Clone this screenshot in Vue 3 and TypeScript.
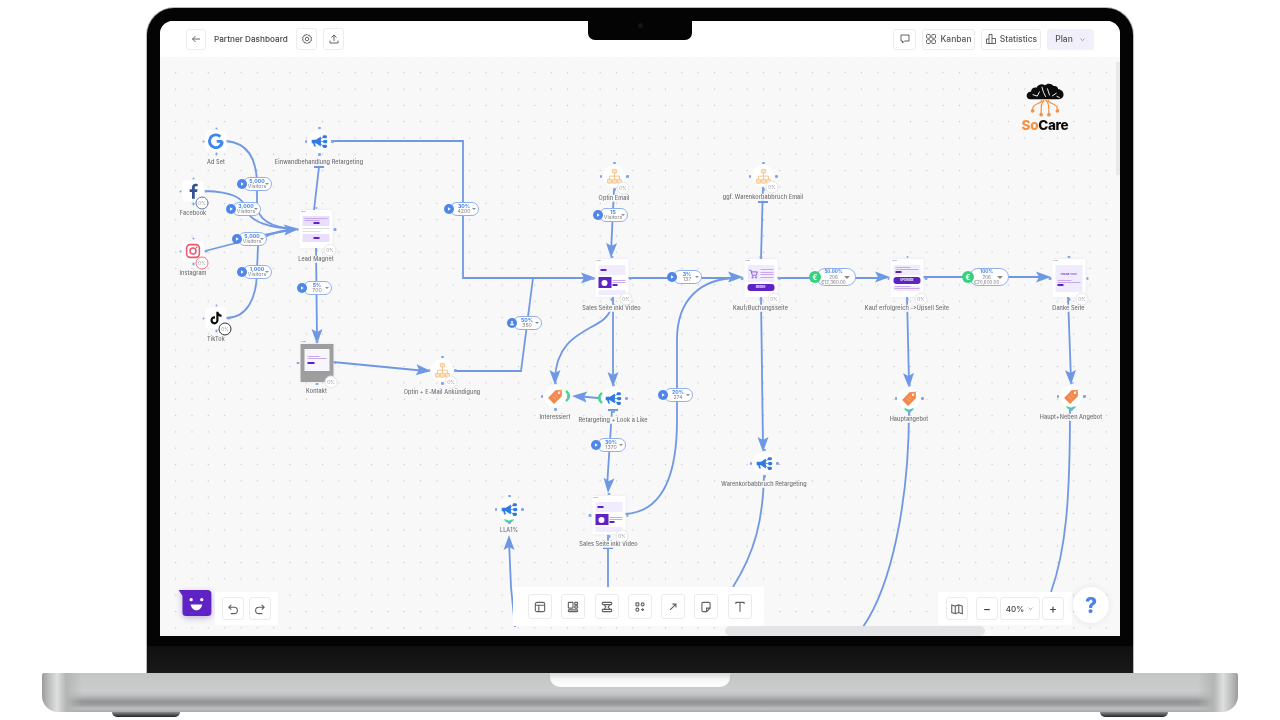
<script setup lang="ts">
interface FlowNode {
  kind: 'circle' | 'brand' | 'page'
  art: string
  x: number
  y: number
  label: string
  labelY: number
  badge?: { x: number; y: number; color?: string }
}

interface Stat {
  x: number
  y: number
  top: string
  bottom: string
  person?: boolean
}

// coordinates are screenshot pixels, the canvas starts at 160,57
const at = (x: number, y: number) => ({ left: `${x - 160}px`, top: `${y - 57}px` })

const nodes: FlowNode[] = [
  { kind: 'brand', art: 'google', x: 216, y: 141, label: 'Ad Set', labelY: 162 },
  { kind: 'brand', art: 'facebook', x: 193, y: 191, label: 'Facebook', labelY: 213, badge: { x: 202, y: 203, color: '#5f76a8' } },
  { kind: 'brand', art: 'instagram', x: 193, y: 251, label: 'Instagram', labelY: 273, badge: { x: 202, y: 263, color: '#f4707f' } },
  { kind: 'brand', art: 'tiktok', x: 216, y: 318, label: 'TikTok', labelY: 339, badge: { x: 225, y: 329, color: '#333333' } },
  { kind: 'circle', art: 'megaphone', x: 319, y: 141, label: 'Einwandbehandlung Retargeting', labelY: 162 },
  { kind: 'page', art: 'lead', x: 316, y: 229, label: 'Lead Magnet', labelY: 259, badge: { x: 330, y: 250 } },
  { kind: 'page', art: 'kontakt', x: 316.5, y: 362.5, label: 'Kontakt', labelY: 391, badge: { x: 331, y: 382 } },
  { kind: 'circle', art: 'funnel', x: 442, y: 370, label: 'Optin + E-Mail Ankündigung', labelY: 392, badge: { x: 451, y: 382 } },
  { kind: 'circle', art: 'funnel', x: 614, y: 176, label: 'Optin Email', labelY: 198, badge: { x: 623, y: 188 } },
  { kind: 'page', art: 'sales', x: 611.5, y: 278, label: 'Sales Seite inkl Video', labelY: 308, badge: { x: 626, y: 299 } },
  { kind: 'circle', art: 'funnel', x: 763, y: 176, label: 'ggf. Warenkorbabbruch Email', labelY: 197, badge: { x: 772, y: 187 } },
  { kind: 'page', art: 'cart', x: 760.5, y: 278, label: 'Kauf/Buchungsseite', labelY: 308, badge: { x: 774, y: 299 } },
  { kind: 'page', art: 'upsell', x: 907, y: 278, label: 'Kauf erfolgreich ->Upsell Seite', labelY: 308, badge: { x: 921, y: 299 } },
  { kind: 'page', art: 'thanks', x: 1068.5, y: 278, label: 'Danke Seite', labelY: 308, badge: { x: 1082, y: 299 } },
  { kind: 'circle', art: 'tag', x: 555, y: 396, label: 'Interessiert', labelY: 417 },
  { kind: 'circle', art: 'megaphone', x: 613, y: 398, label: 'Retargeting + Look a Like', labelY: 420 },
  { kind: 'circle', art: 'tag', x: 909, y: 398, label: 'Hauptangebot', labelY: 419 },
  { kind: 'circle', art: 'tag', x: 1071, y: 396, label: 'Haupt+Neben Angebot', labelY: 417 },
  { kind: 'circle', art: 'megaphone', x: 764, y: 463, label: 'Warenkorbabbruch Retargeting', labelY: 484 },
  { kind: 'circle', art: 'megaphone', x: 509, y: 509, label: 'LLA1%', labelY: 530 },
  { kind: 'page', art: 'sales', x: 608.5, y: 515, label: 'Sales Seite inkl Video', labelY: 544, badge: { x: 622, y: 536 } },
]

const stats: Stat[] = [
  { x: 242, y: 184, top: '5,000', bottom: 'Visitors' },
  { x: 231, y: 209, top: '3,000', bottom: 'Visitors' },
  { x: 237, y: 239, top: '5,000', bottom: 'Visitors' },
  { x: 242, y: 272, top: '1,000', bottom: 'Visitors' },
  { x: 302, y: 288, top: '5%', bottom: '700' },
  { x: 449, y: 209, top: '30%', bottom: '4200' },
  { x: 512, y: 323, top: '50%', bottom: '350', person: true },
  { x: 598, y: 215, top: '15', bottom: 'Visitors' },
  { x: 672, y: 277, top: '3%', bottom: '137' },
  { x: 663, y: 395, top: '20%', bottom: '274' },
  { x: 596, y: 445, top: '30%', bottom: '1370' },
]

const revenue = [
  { x: 815, y: 277, top: '50.00%', mid: '206', bottom: '€12,360.00' },
  { x: 968, y: 277, top: '100%', mid: '206', bottom: '€20,600.00' },
]

const edges = [
  'M226 141C250 143 257 163 257 185V205C258 222 276 228 296 229',
  'M205 191C232 192 243 197 247 210C250 222 270 228 296 229',
  'M205 251L236 243M264 235L296 229',
  'M226 318C246 318 257 300 257 270L258 246C260 236 276 231 296 229',
  'M314 210L319 167M314 167H324',
  'M331 141H463V278H590',
  'M316 248L317 338',
  'M333 362L426 371',
  'M454 371H521L533 278',
  'M614 190L611 252',
  'M628 278H738',
  'M761 259L763 185M758 202H768',
  'M777 278H886',
  'M923 277H1046',
  'M907 297L909 382',
  'M1068 297L1071 380',
  'M909 410C909 500 892 585 863 627',
  'M1070 408C1070 500 1066 550 1051 592',
  'M611 308C606 332 556 326 555 380',
  'M613 297V382',
  'M598 398L576 396',
  'M607 487L612 410M608 410H618',
  'M625 514C660 512 677 480 677 420V340C677 300 700 278 738 278',
  'M761 297L763 447',
  'M764 475C763 520 755 552 733 587',
  'M608 535V590M603 548H613',
  'M509 541L511 587L515 627',
]

// tip x, tip y, direction in degrees
const arrows = [
  [299, 229, -4],
  [317, 344, 90],
  [431, 371, 5],
  [596, 278, 0],
  [611, 258, 92],
  [743, 277, 0],
  [890, 277, 0],
  [1051, 277, 0],
  [909, 388, 88],
  [1071, 385, 88],
  [555, 385, 90],
  [613, 387, 90],
  [572, 396, 184],
  [608, 493, 94],
  [763, 452, 90],
  [509, 535, -90],
]

const docks = [
  'M905 408Q909 414 913 408',
  'M1067 406Q1071 412 1075 406',
  'M505 519Q509 525 513 519',
  'M566 391Q572 396 566 401',
  'M602 393Q596 398 602 403',
]

const handles = ['t', 'r', 'b', 'l']
const toolIcons = ['layout', 'tiles', 'align', 'shapes', 'arrow', 'note', 'text']
</script>

<template>
  <div class="stage">
    <svg class="defs" aria-hidden="true">
      <symbol id="google" viewBox="0 0 24 24">
        <path d="M21 12.5H13M20.8 12.5A9 9 0 1 1 18.2 6" fill="none" stroke="#3f86ee" stroke-width="4" />
      </symbol>
      <symbol id="facebook" viewBox="0 0 24 24">
        <path d="M14.5 23v-9.5h3.3l.6-3.9h-3.9V7.3c0-1.1.5-2 2.1-2h2V2c-.6-.1-1.8-.2-3-.2-3 0-5 1.8-5 5v2.8H7.2v3.9h3.4V23z" fill="#34528f" />
      </symbol>
      <symbol id="instagram" viewBox="0 0 24 24">
        <rect x="3" y="3" width="18" height="18" rx="5" fill="none" stroke="#f0566e" stroke-width="2.2" />
        <circle cx="12" cy="12" r="4.2" fill="none" stroke="#f0566e" stroke-width="2.2" />
        <circle cx="17.2" cy="6.8" r="1.2" fill="#f0566e" />
      </symbol>
      <symbol id="tiktok" viewBox="0 0 24 24">
        <path d="M16.6 5.82A4.28 4.28 0 0 1 15.54 3h-3.09v12.4a2.59 2.59 0 0 1-2.59 2.5c-1.42 0-2.6-1.16-2.6-2.6 0-1.72 1.66-3.01 3.37-2.48V9.66c-3.45-.46-6.47 2.22-6.47 5.64 0 3.33 2.76 5.7 5.69 5.7 3.14 0 5.69-2.55 5.69-5.7V9.01a7.35 7.35 0 0 0 4.3 1.38V7.3s-1.88.09-3.24-1.48z" fill="#0c0c0c" />
      </symbol>
      <symbol id="megaphone" viewBox="0 0 24 24">
        <path d="M1 9.5h6L14 5v14l-7-4.5H5.5L7 19H4.5L3 14.5H1z" fill="#2e7be6" />
        <path d="M14 12h3M14 9l3-3.5M14 15l3 3.5" stroke="#2e7be6" stroke-width="1" />
        <rect x="16.5" y="3" width="6" height="4.5" rx="1.8" fill="#2e7be6" />
        <rect x="17" y="9.8" width="6" height="4.5" rx="1.8" fill="#2e7be6" />
        <rect x="16.5" y="16.5" width="6" height="4.5" rx="1.8" fill="#2e7be6" />
      </symbol>
      <symbol id="funnel" viewBox="0 0 24 24">
        <g fill="#fde3c2" stroke="#f9b56f" stroke-width="1">
          <rect x="9" y="2" width="6" height="5" rx="1" />
          <rect x="2" y="16" width="6" height="5.5" rx="1" />
          <rect x="9" y="16" width="6" height="5.5" rx="1" />
          <rect x="16" y="16" width="6" height="5.5" rx="1" />
        </g>
        <path d="M12 7V16M5 16V11.5H19V16" fill="none" stroke="#f9b56f" stroke-width="1.1" />
      </symbol>
      <symbol id="tag" viewBox="0 0 24 24">
        <path d="M12 3L21 2.5V11.5L10 22.5L1.5 14z" fill="#f4884a" />
        <circle cx="17" cy="6.8" r="1.7" fill="#fff" />
        <path d="M17 7L22 1.5" stroke="#f8b48c" stroke-width="1" />
        <path d="M8 12l4 4M11 9l4 4" stroke="#fbc8a6" stroke-width="1" />
      </symbol>
    </svg>

    <div class="lid">
      <div class="screen">
        <header class="topbar">
          <div class="topbar-side">
            <button class="tb-btn back">
              <svg viewBox="0 0 24 24"><path d="M20 12H5M11 6l-6 6 6 6" /></svg>
            </button>
            <span class="title">Partner Dashboard</span>
            <button class="tb-btn square">
              <svg viewBox="0 0 24 24">
                <path d="M12 2.5l2.2 2.3 3.1-.3 1 3 2.7 1.6-1 3 1 2.9-2.7 1.6-1 3-3.1-.3-2.2 2.2-2.2-2.2-3.1.3-1-3L3 14.5l1-2.9-1-3 2.7-1.6 1-3 3.1.3z" />
                <circle cx="12" cy="12" r="3.5" />
              </svg>
            </button>
            <button class="tb-btn square">
              <svg viewBox="0 0 24 24"><path d="M12 16V4M7 9l5-5 5 5M4 15v5h16v-5" /></svg>
            </button>
          </div>
          <div class="topbar-side right">
            <button class="tb-btn chat">
              <svg viewBox="0 0 24 24"><path d="M4 4h16v12h-9l-4 4v-4H4z" /></svg>
            </button>
            <button class="tb-btn text-btn kanban">
              <svg viewBox="0 0 24 24">
                <rect x="3" y="3" width="7.5" height="7.5" rx="2" />
                <rect x="13.5" y="3" width="7.5" height="7.5" rx="2" />
                <rect x="3" y="13.5" width="7.5" height="7.5" rx="2" />
                <rect x="13.5" y="13.5" width="7.5" height="7.5" rx="2" />
              </svg>
              Kanban
            </button>
            <button class="tb-btn text-btn statistics">
              <svg viewBox="0 0 24 24"><path d="M3 21V12h5V3h6v8h7v10zM8 12v9M14 11v10" /></svg>
              Statistics
            </button>
            <button class="tb-btn text-btn plan">
              Plan
              <svg class="chev" viewBox="0 0 24 24"><path d="M5 9l7 7 7-7" /></svg>
            </button>
          </div>
        </header>
        <div class="notch"><i></i></div>

        <main class="canvas">
          <svg class="wires" viewBox="160 57 960 579">
            <path v-for="d in edges" :key="d" :d="d" class="edge" />
            <polygon
              v-for="a in arrows"
              :key="a.join()"
              points="0,0 -15,-5.5 -12,0 -15,5.5"
              class="arrowhead"
              :transform="`translate(${a[0]} ${a[1]}) rotate(${a[2]})`"
            />
            <path v-for="d in docks" :key="d" :d="d" class="dock" />
          </svg>

          <template v-for="n in nodes" :key="n.art + n.x">
            <span class="node-label" :style="at(n.x, n.labelY)">{{ n.label }}</span>
            <div class="node" :class="n.kind" :style="at(n.x, n.y)">
              <i v-for="h in handles" :key="h" class="handle" :class="h"></i>

              <svg v-if="n.kind !== 'page'" class="node-icon"><use :href="`#${n.art}`" /></svg>

              <div v-else class="thumb" :class="n.art">
                <div class="thumb-dots"><b></b><b></b><b></b></div>
                <template v-if="n.art === 'lead'">
                  <div class="block"><u class="line"></u><u class="line short"></u><u class="dash mid"></u></div>
                  <u class="line gray"></u><u class="line gray short"></u>
                  <div class="block"><u class="dash mid"></u></div>
                </template>
                <template v-else-if="n.art === 'kontakt'">
                  <div class="popup"><u class="line short"></u><u class="line"></u><u class="dash"></u></div>
                </template>
                <template v-else-if="n.art === 'sales'">
                  <div class="block"><u class="dash"></u></div>
                  <div class="video-row">
                    <div class="video"><span></span></div>
                    <div class="video-text"><u class="line"></u><u class="line"></u><u class="dash"></u></div>
                  </div>
                  <div class="block foot"></div>
                </template>
                <template v-else-if="n.art === 'cart'">
                  <div class="block cart-row">
                    <svg viewBox="0 0 24 24" class="cart-ico"><path d="M2 3h4l3 12h10l2-8H7" /><circle cx="10" cy="20" r="1.5" /><circle cx="18" cy="20" r="1.5" /></svg>
                    <div class="cart-lines"><u class="line"></u><u class="line"></u><u class="line"></u><u class="line"></u></div>
                  </div>
                  <div class="cta">ORDER</div>
                </template>
                <template v-else-if="n.art === 'upsell'">
                  <div class="block"><u class="line short"></u><u class="line"></u><u class="dash"></u></div>
                  <div class="cta">UPGRADE</div>
                  <div class="low"><u class="line short"></u><u class="line"></u></div>
                </template>
                <template v-else>
                  <div class="block whole">
                    <span class="thanks-text">THANK YOU!</span>
                    <u class="line short"></u><u class="line"></u><u class="dash"></u>
                  </div>
                </template>
              </div>
            </div>
            <span
              v-if="n.badge"
              class="badge"
              :style="{ ...at(n.badge.x, n.badge.y), borderColor: n.badge.color || '#e6e6e8' }"
            >0%</span>
          </template>

          <div v-for="s in stats" :key="s.top + s.x" class="stat" :style="at(s.x, s.y)">
            <i class="stat-dot">
              <svg v-if="s.person" viewBox="0 0 24 24"><circle cx="12" cy="8" r="4" /><path d="M4 21c0-5 4-8 8-8s8 3 8 8z" /></svg>
              <svg v-else viewBox="0 0 24 24"><path d="M8 5l11 7-11 7z" /></svg>
            </i>
            <div class="stat-pill">
              <span class="stat-text"><b>{{ s.top }}</b><em>{{ s.bottom }}</em></span>
              <span class="caret"></span>
            </div>
          </div>

          <div v-for="r in revenue" :key="r.x" class="stat money" :style="at(r.x, r.y)">
            <i class="stat-dot">€</i>
            <div class="stat-pill">
              <span class="stat-text"><b>{{ r.top }}</b><em>{{ r.mid }}</em><em>{{ r.bottom }}</em></span>
              <span class="caret"></span>
            </div>
          </div>

          <div class="logo">
            <svg viewBox="0 0 48 44" class="logo-mark">
              <path d="M5 21C1 21-1 17 1 14c1-2 3-3 5-3 0-4 4-6 7-5 2-4 7-6 11-3 3-3 8-3 11 1 3-1 6 1 6 4 4 0 7 3 7 7s-3 6-6 6z" fill="#0c0c0c" />
              <path d="M8 15l6 2 3-6M20 5l2 7 3 6M30 16l-3-9M33 17l6-4M39 17l4 2" fill="none" stroke="#fff" stroke-width="1.2" />
              <g fill="none" stroke="#f79040" stroke-width="1.6">
                <path d="M20 22c0 6-12 3-12 12M23 22c-4 4-4 8-4 18M25 22c4 4 4 8 4 18M28 22c0 6 12 3 12 12" />
              </g>
              <g fill="#f79040">
                <circle cx="8" cy="36" r="2.4" /><circle cx="19" cy="41" r="2.4" /><circle cx="29" cy="41" r="2.4" /><circle cx="40" cy="36" r="2.4" />
              </g>
            </svg>
            <div class="logo-text"><span>So</span>Care</div>
          </div>

          <div class="vbar"></div>
          <div class="hbar"></div>

          <div class="bot">
            <svg viewBox="0 0 34 27"><path d="M0 0H30a4 4 0 0 1 4 4V23a4 4 0 0 1-4 4H8a4 4 0 0 1-4-4V6z" fill="#5f22c4" />
              <circle cx="13" cy="10" r="1.7" fill="#fff" /><circle cx="24" cy="10" r="1.7" fill="#fff" />
              <path d="M12.5 15H24.5C24 19 21 21 18.5 21S13 19 12.5 15z" fill="#fff" /></svg>
          </div>

          <div class="panel history">
            <button class="tool small">
              <svg viewBox="0 0 24 24"><path d="M9 5L5 9l4 4M5 9h9a5 5 0 0 1 0 11H8" /></svg>
            </button>
            <button class="tool small">
              <svg viewBox="0 0 24 24"><path d="M15 5l4 4-4 4M19 9h-9a5 5 0 0 0 0 11h6" /></svg>
            </button>
          </div>

          <div class="panel tools">
            <button v-for="t in toolIcons" :key="t" class="tool">
              <svg viewBox="0 0 24 24">
                <template v-if="t === 'layout'"><rect x="4" y="4" width="16" height="16" rx="3" /><path d="M4 9h16M10 9v11" /></template>
                <template v-else-if="t === 'tiles'"><rect x="4" y="4" width="8" height="10" rx="1" /><rect x="15" y="4" width="5" height="4" rx="1" /><rect x="15" y="10" width="5" height="4" rx="1" /><rect x="4" y="17" width="16" height="3" rx="1" /></template>
                <template v-else-if="t === 'align'"><rect x="4" y="4" width="16" height="4" rx="1" /><rect x="4" y="16" width="16" height="4" rx="1" /><path d="M7 8l3 4-3 4M17 8l-3 4 3 4" /></template>
                <template v-else-if="t === 'shapes'"><rect x="5" y="5" width="5" height="5" rx="1" /><circle cx="16.5" cy="7.5" r="2.5" /><rect x="5" y="14" width="5" height="5" rx="2.5" /><path d="M16.5 14v5M14 16.5h5" /></template>
                <template v-else-if="t === 'arrow'"><path d="M7 17L17 7M11 7h6v6" /></template>
                <template v-else-if="t === 'note'"><path d="M5 6a2 2 0 0 1 2-2h10a2 2 0 0 1 2 2v8l-6 6H7a2 2 0 0 1-2-2zM19 14h-6v6" /></template>
                <template v-else><path d="M5 7V4h14v3M12 4v16" /></template>
              </svg>
            </button>
          </div>

          <div class="panel zoombar">
            <button class="tool small">
              <svg viewBox="0 0 24 24"><path d="M3 5l6 2 6-2 6 2v13l-6-2-6 2-6-2zM9 7v13M15 5v13" /></svg>
            </button>
            <div class="zoom-group">
              <button class="tool small">−</button>
              <button class="tool pct">40%
                <svg class="chev" viewBox="0 0 24 24"><path d="M5 9l7 7 7-7" /></svg>
              </button>
              <button class="tool small">+</button>
            </div>
          </div>

          <div class="help">?</div>
        </main>
      </div>
      <div class="chin"></div>
    </div>

    <div class="base">
      <div class="thumb-cut"></div>
    </div>
    <div class="feet"><span></span><span></span></div>
  </div>
</template>

<style>
html, body {
  margin: 0;
  background: #fff;
}
</style>

<style scoped>
.stage {
  width: 1280px;
  height: 720px;
  padding-top: 8px;
  box-sizing: border-box;
  display: flex;
  flex-direction: column;
  align-items: center;
  overflow: hidden;
  position: relative;
  font-family: Inter, "Noto Sans", "Liberation Sans", sans-serif;
}

.defs {
  position: absolute;
  width: 0;
  height: 0;
}

.lid {
  width: 986px;
  height: 665px;
  box-sizing: border-box;
  padding: 13px 13px 0;
  background: #040404;
  border-radius: 27px 27px 0 0;
  box-shadow: 0 0 0 1px #b9b9b9;
  display: flex;
  flex-direction: column;
  flex-shrink: 0;
}

.screen {
  width: 960px;
  height: 615px;
  flex-shrink: 0;
  background: #fff;
  border-radius: 13px 13px 0 0;
  overflow: hidden;
  position: relative;
  display: flex;
  flex-direction: column;
}

.chin {
  margin: 10px -13px 0;
  height: 27px;
  background: linear-gradient(#101010, #191919);
}

.topbar {
  height: 36px;
  flex-shrink: 0;
  padding: 0 26px;
  display: flex;
  align-items: center;
  justify-content: space-between;
  background: #fff;
  filter: blur(0.45px);
}

.topbar-side {
  display: flex;
  align-items: center;
  gap: 6px;
}

.title {
  margin: 0 2px;
  width: 74px;
  font-size: 8.2px;
  font-weight: 500;
  color: #444;
  white-space: nowrap;
}

.tb-btn {
  height: 21px;
  padding: 0;
  display: inline-flex;
  align-items: center;
  justify-content: center;
  background: #fff;
  border: 1px solid #ececee;
  border-radius: 3px;
  font: 500 8.5px Inter, "Noto Sans", sans-serif;
  color: #555;
  box-sizing: border-box;
}

.tb-btn svg {
  width: 12px;
  height: 12px;
  fill: none;
  stroke: #4a4a4a;
  stroke-width: 1.7;
}

.back { width: 20px; }
.square { width: 21px; height: 22px; }
.chat { width: 23px; }
.text-btn { gap: 3px; }
.kanban { width: 53px; }
.statistics { width: 60px; }

.plan {
  width: 47px;
  background: #f1eff9;
  border-color: #f1eff9;
  gap: 6px;
}

.tb-btn .chev {
  width: 7px;
  height: 7px;
}

.notch {
  position: absolute;
  left: 428px;
  top: 0;
  width: 104px;
  height: 19px;
  background: #040404;
  border-radius: 0 0 7px 7px;
  display: flex;
  justify-content: center;
}

.notch i {
  width: 5px;
  height: 5px;
  margin-top: 2px;
  border-radius: 50%;
  background: #12141a;
}

.canvas {
  flex: 1;
  position: relative;
  overflow: hidden;
  background-color: #f8f8f9;
  background-image: radial-gradient(circle, #c6c6ca 0.75px, transparent 1px);
  background-size: 16.33px 16.33px;
  background-position: 7.5px 7.5px;
  filter: blur(0.55px);
}

.wires {
  position: absolute;
  left: 0;
  top: 0;
  width: 960px;
  height: 579px;
}

.edge {
  fill: none;
  stroke: #6f98e4;
  stroke-width: 1.8;
}

.arrowhead {
  fill: #6f98e4;
}

.dock {
  fill: none;
  stroke: #3ddc84;
  stroke-width: 2.4;
}

.node {
  position: absolute;
  transform: translate(-50%, -50%);
  display: flex;
  align-items: center;
  justify-content: center;
  background: #fff;
}

.node.circle {
  width: 22px;
  height: 22px;
  border-radius: 50%;
}

.node.brand {
  width: 21px;
  height: 21px;
  border-radius: 3px;
}

.node.page {
  width: 33px;
  height: 38px;
  box-shadow: 0 0 3px rgba(60, 50, 110, 0.1);
}

.node-icon {
  width: 17px;
  height: 17px;
}

.handle {
  position: absolute;
  width: 2.5px;
  height: 2.5px;
  border-radius: 50%;
  background: #7ea4ea;
}

.handle.t { left: calc(50% - 1px); top: -3.5px; }
.handle.b { left: calc(50% - 1px); bottom: -3.5px; }
.handle.l { top: calc(50% - 1px); left: -3.5px; }
.handle.r { top: calc(50% - 1px); right: -3.5px; }

.thumb {
  width: 100%;
  height: 100%;
  box-sizing: border-box;
  padding: 6px 3px 0;
  display: flex;
  flex-direction: column;
  gap: 2px;
  overflow: hidden;
}

.thumb-dots {
  position: absolute;
  left: 1.5px;
  top: 1px;
  display: flex;
  gap: 0.5px;
}

.thumb-dots b {
  width: 1px;
  height: 1px;
  background: #9a9aa5;
}

.block {
  background: #f1ecfd;
  padding: 2px;
  display: flex;
  flex-direction: column;
  gap: 1px;
  box-sizing: border-box;
  height: 10px;
  flex-shrink: 0;
  justify-content: center;
}

.block.foot { height: 5px; padding: 0; }
.block.whole { height: 27px; }

.lead .block { background: #e9defc; }
.lead .block:last-child { height: 8px; }

.low {
  display: flex;
  flex-direction: column;
  gap: 1px;
  padding: 0 1px;
  background: #f1ecfd;
  height: 5px;
  flex-shrink: 0;
}

.line {
  display: block;
  height: 1px;
  background: #c8a9ee;
  text-decoration: none;
}

.line.short { width: 65%; }
.line.gray { background: #dedee6; }

.dash {
  display: block;
  width: 6px;
  height: 2px;
  background: #5f22c4;
}

.dash.mid { margin: 0 auto; }

.thumb.kontakt {
  background: #9e9e9e;
  padding: 5px 4px;
}

.thumb.kontakt .thumb-dots { top: -3px; }

.popup {
  height: 22px;
  background: #f8f6fd;
  padding: 7px 3px 0;
  box-sizing: border-box;
  display: flex;
  flex-direction: column;
  gap: 1.5px;
}

.popup .dash { width: 7px; margin-top: 1.5px; }

.video-row {
  display: flex;
  gap: 1.5px;
  align-items: center;
}

.video {
  width: 13px;
  height: 11px;
  flex-shrink: 0;
  background: #5f22c4;
  display: flex;
  align-items: center;
  justify-content: center;
}

.video span {
  width: 6px;
  height: 6px;
  border-radius: 50%;
  background: #fff;
}

.video-text {
  flex: 1;
  display: flex;
  flex-direction: column;
  gap: 1px;
}

.video-text .dash { width: 5px; }

.block.cart-row {
  height: 17px;
  flex-direction: row;
  align-items: center;
  gap: 2px;
  padding: 1px;
}

.cart-ico {
  width: 10px;
  height: 10px;
  flex-shrink: 0;
  fill: none;
  stroke: #7d3fd6;
  stroke-width: 2;
}

.cart-lines {
  flex: 1;
  display: flex;
  flex-direction: column;
  gap: 1.5px;
}

.cta {
  height: 6.5px;
  flex-shrink: 0;
  border-radius: 3px;
  background: #5f22c4;
  color: #fff;
  font-size: 2.8px;
  font-weight: 700;
  line-height: 6.5px;
  text-align: center;
}

.thanks-text {
  font-size: 2.6px;
  font-weight: 700;
  color: #6a3bc8;
  text-align: center;
  margin-bottom: 3px;
  white-space: nowrap;
}

.node-label {
  position: absolute;
  transform: translate(-50%, -50%);
  padding: 0 1px;
  background: #f8f8f9;
  font-size: 5.5px;
  line-height: 6.5px;
  font-weight: 500;
  color: #6e6e74;
  white-space: nowrap;
  letter-spacing: 0.1px;
}

.badge {
  position: absolute;
  width: 13px;
  height: 13px;
  box-sizing: border-box;
  transform: translate(-50%, -50%);
  border: 1px solid #e6e6e8;
  border-radius: 50%;
  background: #fff;
  font-size: 4.6px;
  color: #9a9aa2;
  display: flex;
  align-items: center;
  justify-content: center;
}

.stat {
  position: absolute;
  height: 0;
  display: flex;
  align-items: center;
}

.stat-dot {
  position: absolute;
  left: -5px;
  top: -5px;
  width: 10px;
  height: 10px;
  z-index: 1;
  border-radius: 50%;
  background: #4f86ea;
  display: flex;
  align-items: center;
  justify-content: center;
  font-style: normal;
  font-size: 7px;
  font-weight: 700;
  color: #fff;
}

.stat-dot svg {
  width: 6px;
  height: 6px;
  fill: #fff;
}

.stat-pill {
  position: absolute;
  left: 1px;
  top: -7px;
  width: 29px;
  height: 14px;
  box-sizing: border-box;
  border: 1px solid #8fb0ee;
  border-radius: 7px;
  background: #fff;
  display: flex;
  align-items: center;
  padding: 0 2px 0 3px;
}

.stat-text {
  flex: 1;
  display: flex;
  flex-direction: column;
  align-items: center;
  padding-top: 0.5px;
  font-size: 5.2px;
  line-height: 5.5px;
}

.stat-text b {
  font-weight: 700;
  color: #4a82ea;
}

.stat-text em {
  font-style: normal;
  color: #808088;
}

.caret {
  width: 0;
  height: 0;
  margin-left: -2px;
  border-left: 2.5px solid transparent;
  border-right: 2.5px solid transparent;
  border-top: 2.5px solid #8a8a92;
}

.money .stat-dot {
  left: -6px;
  top: -6px;
  width: 12px;
  height: 12px;
  background: #35d37c;
}

.money .stat-pill {
  top: -9px;
  width: 40px;
  height: 18px;
  border-radius: 9px;
  padding: 0 5px 0 4px;
}

.money .stat-text {
  font-size: 4.6px;
  line-height: 5.2px;
}

.money .caret {
  border-left-width: 3.5px;
  border-right-width: 3.5px;
  border-top-width: 3.5px;
}

.logo {
  position: absolute;
  left: 860px;
  top: 26px;
  width: 50px;
  display: flex;
  flex-direction: column;
  align-items: center;
}

.logo-mark {
  width: 38px;
  height: 34px;
  flex-shrink: 0;
}

.logo-text {
  margin-top: 2px;
  font-size: 13.5px;
  font-weight: 800;
  letter-spacing: -0.3px;
  line-height: 13px;
  color: #0c0c0c;
}

.logo-text span {
  color: #f7903f;
}

.vbar {
  position: absolute;
  right: 0;
  top: 5px;
  width: 4px;
  height: 113px;
  background: #e9e9ec;
}

.hbar {
  position: absolute;
  left: 565px;
  bottom: 0;
  width: 260px;
  height: 10px;
  border-radius: 5px;
  background: #e4e4e7;
}

.bot {
  position: absolute;
  left: 18px;
  top: 533px;
  width: 34px;
  height: 26px;
  filter: drop-shadow(0 2px 3px rgba(60, 30, 130, 0.3));
}

.bot svg {
  width: 100%;
  height: 100%;
  display: block;
}

.panel {
  position: absolute;
  display: flex;
  align-items: center;
  background: #fff;
}

.history {
  left: 55px;
  top: 535px;
  height: 33px;
  padding: 0 7px;
  gap: 5px;
}

.tools {
  left: 353px;
  top: 530px;
  height: 39px;
  padding: 0 12px 0 15px;
  gap: 9.3px;
}

.zoombar {
  left: 778px;
  top: 535px;
  height: 33px;
  padding: 0 8px;
  gap: 8px;
}

.zoom-group {
  display: flex;
  gap: 2px;
  align-items: center;
}

.tool {
  width: 24px;
  height: 25px;
  padding: 0;
  box-sizing: border-box;
  background: #fff;
  border: 1px solid #ebebed;
  border-radius: 3px;
  display: flex;
  align-items: center;
  justify-content: center;
  gap: 3px;
  font: 500 9px Inter, "Noto Sans", sans-serif;
  color: #444;
}

.tool.small {
  width: 22px;
  height: 23px;
  font-size: 12px;
}

.tool.pct {
  width: 40px;
  height: 23px;
  font-size: 8px;
}

.tool svg {
  width: 14px;
  height: 14px;
  fill: none;
  stroke: #606064;
  stroke-width: 1.9;
}

.tool .chev {
  width: 7px;
  height: 7px;
}

.help {
  position: absolute;
  left: 913px;
  top: 530px;
  width: 36px;
  height: 36px;
  border-radius: 50%;
  background: #fff;
  box-shadow: 0 0 6px rgba(60, 60, 90, 0.1);
  color: #4a84ea;
  font-size: 21px;
  font-weight: 800;
  display: flex;
  align-items: center;
  justify-content: center;
}

.base {
  width: 1196px;
  height: 39px;
  flex-shrink: 0;
  position: relative;
  display: flex;
  justify-content: center;
  border-radius: 2px 2px 16px 16px;
  background:
    linear-gradient(90deg, #9a9c9c 0, #b9baba 6px, #dedfdf 15px, #b4b6b6 24px, rgba(180, 182, 182, 0) 40px, rgba(180, 182, 182, 0) calc(100% - 40px), #b4b6b6 calc(100% - 24px), #dedfdf calc(100% - 15px), #b9baba calc(100% - 6px), #9a9c9c 100%),
    linear-gradient(#c3c5c5 0, #cbcdcc 45%, #c0c2c2 56%, #a9abac 65%, #929495 73%, #9c9e9f 82%, #bdbebf 91%, #a9aaab 100%);
}

.thumb-cut {
  width: 180px;
  height: 14px;
  border-radius: 0 0 10px 10px;
  background: linear-gradient(#d6d7d7, #f6f6f6 45%, #fff);
}

.feet {
  width: 1056px;
  height: 6px;
  flex-shrink: 0;
  display: flex;
  justify-content: space-between;
}

.feet span {
  width: 68px;
  height: 5px;
  border-radius: 0 0 10px 10px;
  background: linear-gradient(#8d8d8d, #222);
}
</style>
